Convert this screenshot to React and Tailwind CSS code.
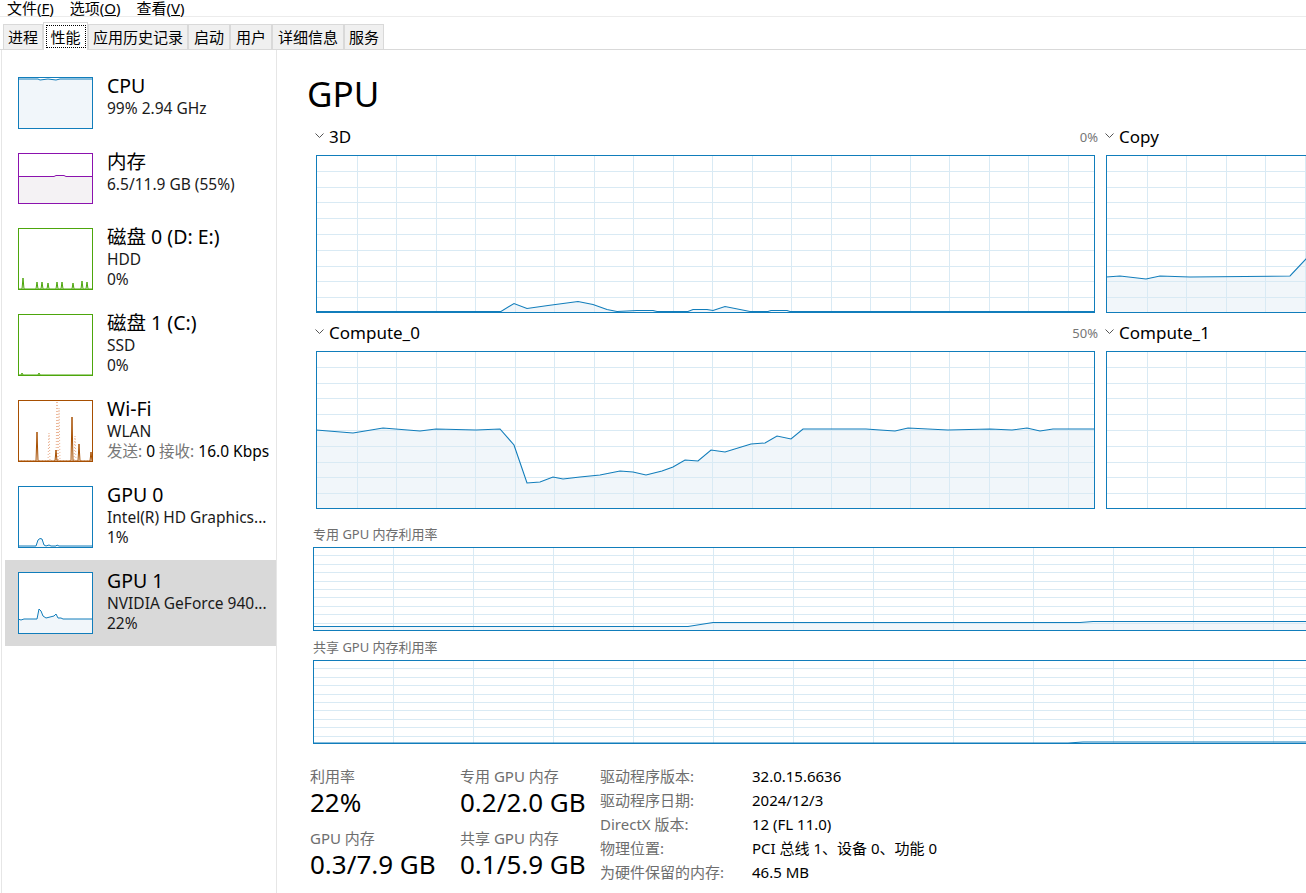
import React from "react";

const BLUE = "#117dbb";
const GRID = "#d9eaf4";
const FILL = "#f1f6fa";

// perf chart drawn as svg: grid, filled area, line, border
function Chart({ w, h, colStep, colStart, rows, points, stroke = BLUE }) {
  const vlines = [];
  for (let x = colStart; x < w - 1; x += colStep) vlines.push(Math.round(x) + 0.5);
  const hlines = [];
  for (let i = 1; i < rows; i++) hlines.push(Math.round((h * i) / rows) + 0.5);
  const pts = points ? points.map((p) => p.join(",")).join(" ") : "";
  return (
    <svg width={w} height={h} viewBox={`0 0 ${w} ${h}`} className="block">
      <rect x="0" y="0" width={w} height={h} fill="#fff" />
      {points && <polygon points={`0,${h} ${pts} ${w},${h}`} fill={FILL} />}
      {vlines.map((x) => (
        <line key={"v" + x} x1={x} y1="0" x2={x} y2={h} stroke={GRID} strokeWidth="1" />
      ))}
      {hlines.map((y) => (
        <line key={"h" + y} x1="0" y1={y} x2={w} y2={y} stroke={GRID} strokeWidth="1" />
      ))}
      {points && <polyline points={pts} fill="none" stroke={stroke} strokeWidth="1.1" />}
      <rect x="0.5" y="0.5" width={w - 1} height={h - 1} fill="none" stroke={stroke} strokeWidth="1" />
    </svg>
  );
}

function Thumb({ h, color, fill, points, dashed, area = true }) {
  const w = 75;
  const pts = points.map((p) => p.join(",")).join(" ");
  return (
    <svg width={w} height={h} viewBox={`0 0 ${w} ${h}`} className="block shrink-0">
      <rect x="0" y="0" width={w} height={h} fill="#fff" />
      {area && <polygon points={`0,${h} ${pts} ${w},${h}`} fill={fill} />}
      {dashed && (
        <polyline
          points={dashed.map((p) => p.join(",")).join(" ")}
          fill="none"
          stroke="#e08a5a"
          strokeWidth="1"
          strokeDasharray="1 2"
          opacity="0.7"
        />
      )}
      <polyline points={pts} fill="none" stroke={color} strokeWidth="1" />
      <rect x="0.5" y="0.5" width={w - 1} height={h - 1} fill="none" stroke={color} strokeWidth="1" />
    </svg>
  );
}

function Chevron() {
  return (
    <svg width="10" height="6" viewBox="0 0 10 6" className="block shrink-0 mt-[-2px]">
      <polyline points="0.5,0.5 4.5,4.5 8.5,0.5" fill="none" stroke="#555" strokeWidth="1" />
    </svg>
  );
}

const spikes = (base, list) => {
  const out = [[0, base]];
  list.forEach(([x, top]) => {
    out.push([x - 1, base], [x, top], [x + 1, base]);
  });
  out.push([75, base]);
  return out;
};

const sideItems = [
  {
    title: "CPU",
    lines: ["99% 2.94 GHz"],
    thumb: (
      <Thumb
        h={52}
        color={BLUE}
        fill={FILL}
        points={[[0, 2], [20, 2], [22, 3], [30, 2], [38, 3], [42, 2], [75, 2]]}
      />
    ),
  },
  {
    title: "内存",
    lines: ["6.5/11.9 GB (55%)"],
    thumb: (
      <Thumb
        h={51}
        color="#8b12ae"
        fill="#f4f2f4"
        points={[[0, 23.5], [36, 23.5], [38, 22.5], [46, 22.5], [48, 23.5], [75, 23.5]]}
      />
    ),
  },
  {
    title: "磁盘 0 (D: E:)",
    lines: ["HDD", "0%"],
    thumb: (
      <Thumb
        h={62}
        color="#4da60c"
        fill="#eff7e9"
        points={spikes(61, [[5, 50], [19, 54], [24, 54], [30, 55], [39, 54], [44, 54], [55, 55], [64, 53], [69, 54]])}
      />
    ),
  },
  {
    title: "磁盘 1 (C:)",
    lines: ["SSD", "0%"],
    thumb: (
      <Thumb h={62} color="#4da60c" fill="#eff7e9" points={spikes(61, [[4, 59], [21, 59]])} />
    ),
  },
  {
    title: "Wi-Fi",
    lines: ["WLAN"],
    extra: true,
    thumb: (
      <Thumb
        h={62}
        color="#a74f01"
        fill="#fcf3eb"
        area={false}
        points={spikes(61, [[19, 32], [38, 50], [54, 17], [61, 44], [73, 52]])}
        dashed={spikes(61, [[31, 33], [39, 1], [41, 8], [57, 36]])}
      />
    ),
  },
  {
    title: "GPU 0",
    lines: ["Intel(R) HD Graphics...", "1%"],
    thumb: (
      <Thumb
        h={62}
        color={BLUE}
        fill={FILL}
        points={[[0, 60], [18, 60], [20, 54], [22, 52.5], [24, 53], [26, 59], [28, 60], [31, 59], [33, 60], [38, 60], [39, 59], [41, 60], [75, 60]]}
      />
    ),
  },
  {
    title: "GPU 1",
    lines: ["NVIDIA GeForce 940...", "22%"],
    selected: true,
    thumb: (
      <Thumb
        h={62}
        color={BLUE}
        fill={FILL}
        points={[[0, 47], [3, 48], [6, 47], [19, 47], [21, 37], [23, 39], [25, 44], [28, 46], [32, 45], [36, 44], [38, 42], [40, 46], [43, 46], [45, 47], [75, 47]]}
      />
    ),
  },
];

const tabs = [
  { label: "进程", w: "w-[40px]" },
  { label: "性能", w: "w-[45px]", active: true },
  { label: "应用历史记录", w: "w-[100px]" },
  { label: "启动", w: "w-[42px]" },
  { label: "用户", w: "w-[42px]" },
  { label: "详细信息", w: "w-[72px]" },
  { label: "服务", w: "w-[40px]" },
];

const pts3d = [
  [0, 156.5], [185, 156.5], [198, 148.5], [211, 153.5], [232, 150.5], [262, 146.5], [277, 149.5], [291, 154.5],
  [301, 156.5], [321, 155.5], [337, 155.5], [341, 156.5], [372, 156.5], [377, 154.5], [391, 154.5], [397, 155.5],
  [409, 151.5], [434, 156.5], [452, 156.5], [455, 155.5], [471, 155.5], [474, 156.5], [779, 156.5],
];

const ptsCompute0 = [
  [0, 79], [37, 82], [67, 77], [104, 80], [120, 78], [160, 79], [184, 78], [198, 94], [211, 132], [224, 131],
  [237, 126], [247, 128], [264, 126], [284, 124], [304, 120], [317, 121], [330, 124], [346, 120], [357, 116],
  [369, 109], [382, 110], [395, 99], [409, 101], [435, 93], [449, 92], [461, 85], [475, 88], [487, 78], [550, 78],
  [564, 79], [579, 80], [592, 77], [632, 79], [674, 78], [696, 79], [711, 77], [724, 80], [737, 78], [779, 78],
];

const ptsCopy = [[0, 122], [14, 121], [40, 124], [54, 121], [84, 122], [184, 121], [200, 104], [215, 92], [240, 96], [779, 96]];

const details = [
  ["驱动程序版本:", "32.0.15.6636"],
  ["驱动程序日期:", "2024/12/3"],
  ["DirectX 版本:", "12 (FL 11.0)"],
  ["物理位置:", "PCI 总线 1、设备 0、功能 0"],
  ["为硬件保留的内存:", "46.5 MB"],
];

function SectionHead({ name, pct }) {
  return (
    <div className="flex items-center justify-between h-[22px]">
      <div className="flex items-center gap-[4px] ml-[-1px]">
        <Chevron />
        <span className="text-[17px] leading-[22px] text-black">{name}</span>
      </div>
      {pct && <span className="text-[13px] leading-[22px] text-[#767676] mr-[-3px]">{pct}</span>}
    </div>
  );
}

export default function App() {
  return (
    <div className="w-[1306px] h-[893px] overflow-hidden bg-white text-black font-['Noto_Sans','Noto_Sans_CJK_SC',sans-serif]">
      {/* menu */}
      <div className="h-[17px] flex items-center gap-[16px] pl-[7px] text-[15px] leading-[16px] border-b border-[#ececec]">
        <span>
          文件(<span className="underline">F</span>)
        </span>
        <span>
          选项(<span className="underline">O</span>)
        </span>
        <span>
          查看(<span className="underline">V</span>)
        </span>
      </div>

      {/* tabs */}
      <div className="h-[33px] flex items-end pl-[3px] border-b border-[#d9d9d9]">
        {tabs.map((t) =>
          t.active ? (
            <div
              key={t.label}
              className={`${t.w} h-[28px] -mb-px relative bg-white border border-b-0 border-[#d9d9d9] flex items-center justify-center`}
            >
              <span className="border border-dotted border-black px-[2px] h-[23px] w-[40px] flex items-center justify-center text-[15px] leading-[20px]">
                {t.label}
              </span>
            </div>
          ) : (
            <div
              key={t.label}
              className={`${t.w} h-[25px] bg-[#f0f0f0] border border-b-0 border-[#d9d9d9] flex items-center justify-center text-[15px] leading-[20px]`}
            >
              {t.label}
            </div>
          )
        )}
      </div>

      <div className="flex h-[843px]">
        {/* side list */}
        <div className="w-[276px] shrink-0 ml-[1px] border-l border-r border-[#e6e6e6] pt-[15px] pl-[3px]">
          {sideItems.map((it) => (
            <div
              key={it.title}
              className={`flex gap-[14px] pl-[13px] py-[12px] ${it.selected ? "bg-[#d9d9d9]" : ""}`}
            >
              {it.thumb}
              <div className="flex flex-col mt-[-3px] whitespace-nowrap">
                <span className="text-[19.5px] leading-[24px]">{it.title}</span>
                {it.lines.map((l) => (
                  <span key={l} className="text-[15.5px] leading-[20px] text-[#1a1a1a]">
                    {l}
                  </span>
                ))}
                {it.extra && (
                  <span className="text-[15.5px] leading-[20px]">
                    <span className="text-[#777]">发送: </span>0 <span className="text-[#777]">接收: </span>16.0 Kbps
                  </span>
                )}
              </div>
            </div>
          ))}
        </div>

        {/* detail */}
        <div className="shrink-0 pl-[30px]">
          <div className="mt-[22px] text-[35px] leading-[44px]">GPU</div>

          <div className="ml-[9px] mt-[10px] flex gap-[11px]">
            <div className="w-[779px] shrink-0">
              <SectionHead name="3D" pct="0%" />
              <div className="mt-[7px]">
                <Chart w={779} h={158} colStep={39.5} colStart={40.7} rows={10} points={pts3d} />
              </div>
            </div>
            <div className="w-[779px] shrink-0">
              <SectionHead name="Copy" />
              <div className="mt-[7px]">
                <Chart w={779} h={158} colStep={39.5} colStart={40.7} rows={10} points={ptsCopy} />
              </div>
            </div>
          </div>

          <div className="ml-[9px] mt-[9px] flex gap-[11px]">
            <div className="w-[779px] shrink-0">
              <SectionHead name="Compute_0" pct="50%" />
              <div className="mt-[7px]">
                <Chart w={779} h={158} colStep={39.5} colStart={40.7} rows={10} points={ptsCompute0} />
              </div>
            </div>
            <div className="w-[779px] shrink-0">
              <SectionHead name="Compute_1" />
              <div className="mt-[7px]">
                <Chart w={779} h={158} colStep={39.5} colStart={40.7} rows={10} />
              </div>
            </div>
          </div>

          <div className="ml-[6px] mt-[16px] text-[13px] leading-[18px] text-[#6e6e6e]">专用 GPU 内存利用率</div>
          <div className="ml-[6px] mt-[4px]">
            <Chart
              w={1569}
              h={84}
              colStep={80}
              colStart={80}
              rows={10}
              points={[[0, 79.5], [375, 79.5], [400, 75.5], [767, 75.5], [780, 74.5], [1569, 74.5]]}
            />
          </div>

          <div className="ml-[6px] mt-[7px] text-[13px] leading-[18px] text-[#6e6e6e]">共享 GPU 内存利用率</div>
          <div className="ml-[6px] mt-[4px]">
            <Chart
              w={1569}
              h={84}
              colStep={80}
              colStart={80}
              rows={10}
              points={[[0, 83], [755, 83], [770, 82], [1569, 82]]}
            />
          </div>

          {/* stats */}
          <div className="ml-[3px] mt-[22px] flex">
            <div className="w-[150px] flex flex-col">
              <span className="text-[15px] leading-[20px] text-[#6e6e6e]">利用率</span>
              <span className="text-[26px] leading-[32px]">22%</span>
              <span className="mt-[10px] text-[15px] leading-[20px] text-[#6e6e6e]">GPU 内存</span>
              <span className="text-[26px] leading-[32px]">0.3/7.9 GB</span>
            </div>
            <div className="w-[140px] flex flex-col">
              <span className="text-[15px] leading-[20px] text-[#6e6e6e]">专用 GPU 内存</span>
              <span className="text-[26px] leading-[32px]">0.2/2.0 GB</span>
              <span className="mt-[10px] text-[15px] leading-[20px] text-[#6e6e6e]">共享 GPU 内存</span>
              <span className="text-[26px] leading-[32px]">0.1/5.9 GB</span>
            </div>
            <div className="mt-[-2px] flex flex-col">
              {details.map(([k, v]) => (
                <div key={k} className="flex h-[24px] items-center text-[15px]">
                  <span className="w-[152px] text-[#6e6e6e]">{k}</span>
                  <span className="text-black">{v}</span>
                </div>
              ))}
            </div>
          </div>
        </div>
      </div>
    </div>
  );
}
